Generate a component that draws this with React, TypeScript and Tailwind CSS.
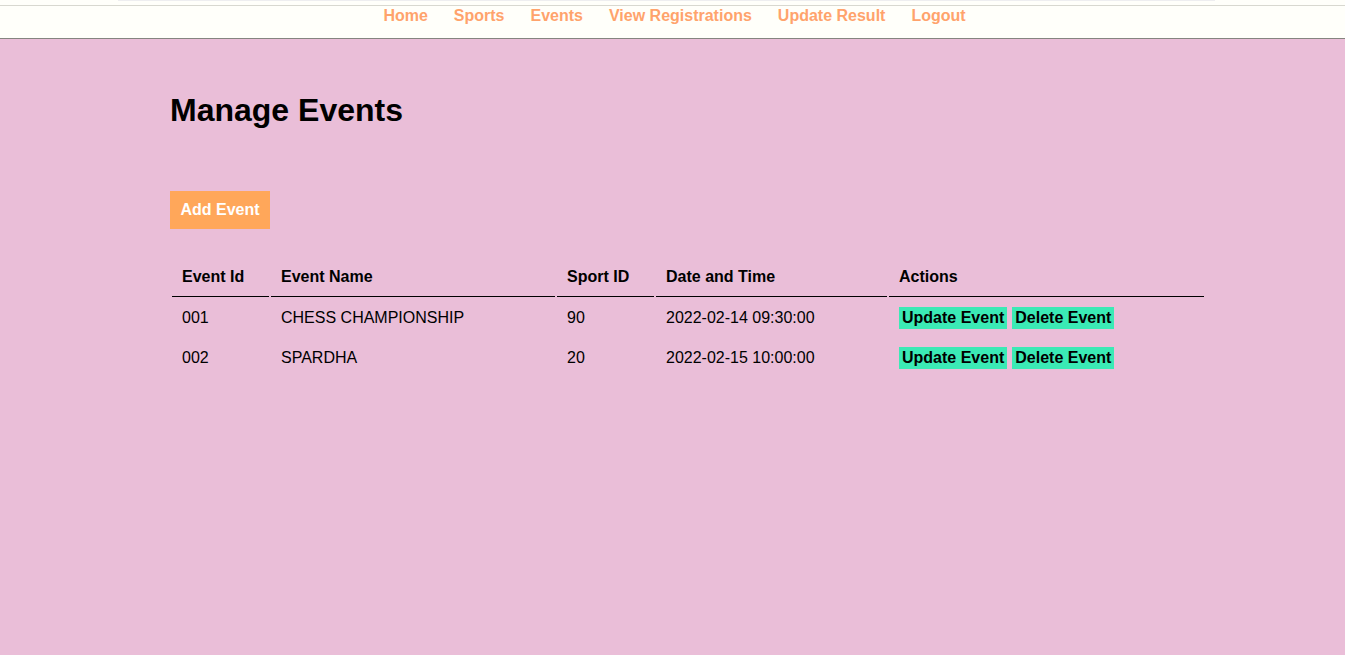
import React from "react";

const links = ["Home", "Sports", "Events", "View Registrations", "Update Result", "Logout"];

const rows = [
  { id: "001", name: "CHESS CHAMPIONSHIP", sport: "90", date: "2022-02-14 09:30:00" },
  { id: "002", name: "SPARDHA", sport: "20", date: "2022-02-15 10:00:00" },
];

export default function App() {
  return (
    <div
      className="min-h-[655px] w-full bg-[#eabed8] text-black"
      style={{ fontFamily: '"Liberation Sans", Arial, sans-serif' }}
    >
      <header className="bg-[#fffffa] border-b border-[#85857f]">
        <div className="h-[5px] flex">
          <div className="ml-[118px] w-[1097px] h-[1px] bg-[#eeeef0]" />
        </div>
        <div className="h-[1px] bg-[#d8d8d0]" />
        <nav className="h-[32px] pt-[1px] flex justify-center gap-[26px] pl-[4px]">
          {links.map((l) => (
            <a key={l} href="#" className="text-[16px] leading-[18px] font-bold text-[#ffa36c] h-[18px]">
              {l}
            </a>
          ))}
        </nav>
      </header>
      <main className="pl-[170px]">
        <h1 className="pt-[53px] text-[32px] leading-[37px] font-bold">Manage Events</h1>
        <button className="mt-[62px] h-[38px] w-[100px] bg-[#ffa75a] text-white font-bold text-[16px] leading-[18px] flex items-center justify-center">
          Add Event
        </button>
        <table className="mt-[27px] w-[1036px] table-fixed border-separate border-spacing-[2px] text-[16px] leading-[18px] text-left">
          <thead>
            <tr>
              <th className="w-[97px] p-[10px] border-b border-black font-bold">Event Id</th>
              <th className="w-[284px] p-[10px] border-b border-black font-bold">Event Name</th>
              <th className="w-[97px] p-[10px] border-b border-black font-bold">Sport ID</th>
              <th className="w-[231px] p-[10px] border-b border-black font-bold">Date and Time</th>
              <th className="w-[315px] p-[10px] border-b border-black font-bold">Actions</th>
            </tr>
          </thead>
          <tbody>
            {rows.map((r) => (
              <tr key={r.id}>
                <td className="p-[10px]">{r.id}</td>
                <td className="p-[10px]">{r.name}</td>
                <td className="p-[10px]">{r.sport}</td>
                <td className="p-[10px]">{r.date}</td>
                <td className="px-[10px] py-[8px]">
                  <div className="flex gap-[5px]">
                    <button className="h-[22px] px-[3px] bg-[#3beab5] font-bold text-[16px] leading-[18px] text-black">
                      Update Event
                    </button>
                    <button className="h-[22px] px-[3px] bg-[#3beab5] font-bold text-[16px] leading-[18px] text-black">
                      Delete Event
                    </button>
                  </div>
                </td>
              </tr>
            ))}
          </tbody>
        </table>
      </main>
    </div>
  );
}
